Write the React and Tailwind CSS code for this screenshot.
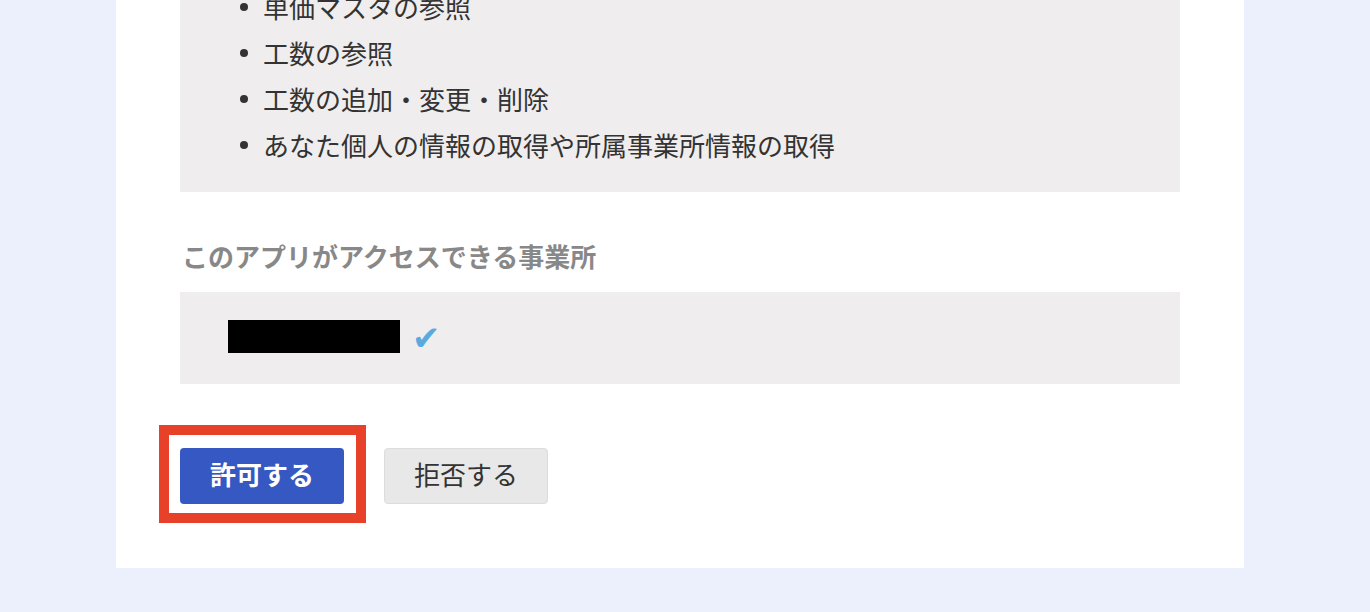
export default function App() {
  const scopes = [
    "単価マスタの参照",
    "工数の参照",
    "工数の追加・変更・削除",
    "あなた個人の情報の取得や所属事業所情報の取得",
  ];

  return (
    <div
      className="min-h-[612px] h-[612px] overflow-hidden bg-[#ebf0fc] text-[#333]"
      style={{ fontFamily: '"Noto Sans CJK JP", "Noto Sans", sans-serif' }}
    >
      <div className="ml-[116px] w-[1128px] bg-white px-16 pb-16 -mt-[40px]">
        {/* Permission scopes */}
        <div className="bg-[#efedee] pl-[60px] pt-[24px] pb-[24px]">
          <ul>
            {scopes.map((s) => (
              <li key={s} className="flex items-center h-[46px] text-[26px] leading-[46px]">
                <span className="w-[8px] h-[8px] rounded-full bg-[#333] mr-[15px] shrink-0"></span>
                {s}
              </li>
            ))}
          </ul>
        </div>

        {/* Offices */}
        <h2 className="mt-[44px] mb-[16px] h-[40px] leading-[40px] text-[26px] font-bold text-[#888] pl-[2px]">
          このアプリがアクセスできる事業所
        </h2>
        <div className="bg-[#efedee] h-[92px] flex items-center pl-12">
          <div className="w-[172px] h-[33px] bg-black -mt-[4px]"></div>
          <span
            className="ml-[12px] text-[34px] leading-none text-[#5aaae0]"
            style={{ fontFamily: '"DejaVu Sans", sans-serif' }}
          >
            ✔
          </span>
        </div>

        {/* Actions */}
        <div className="flex items-center gap-10 mt-16">
          <div className="relative">
            <button className="w-[164px] h-[56px] rounded-[4px] bg-[#3558c2] text-white text-[26px] font-bold leading-none pb-[5px]">
              許可する
            </button>
            <div className="absolute -left-[21px] -top-[23px] -right-[22px] -bottom-[19px] border-[10px] border-[#e8412a] pointer-events-none"></div>
          </div>
          <button className="w-[164px] h-[56px] rounded-[4px] bg-[#e8e8e8] border border-[#dcdcdc] text-[#333] text-[26px] leading-none pb-[5px]">
            拒否する
          </button>
        </div>
      </div>
    </div>
  );
}
